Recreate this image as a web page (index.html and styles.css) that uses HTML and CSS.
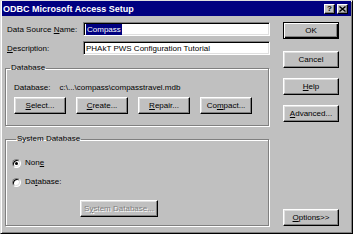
FILE: index.html
```html
<!DOCTYPE html>
<html>
<head>
<meta charset="utf-8">
<link rel="stylesheet" href="styles.css">
</head>
<body>
<div class="win">
  <div class="title">
    <span class="title-text">ODBC Microsoft Access Setup</span>
    <span class="tbtn q">?</span>
    <span class="tbtn x"><svg width="7" height="6" viewBox="0 0 7 6"><path d="M0.5 0.5 L6.5 5.5 M6.5 0.5 L0.5 5.5" stroke="#000" stroke-width="1.4"/></svg></span>
  </div>
  <div class="body">
    <div class="left">
      <div class="field">
        <span class="lbl">Data Source <u>N</u>ame:</span>
        <span class="input"><span class="sel">Compass</span></span>
      </div>
      <div class="field second">
        <span class="lbl"><u>D</u>escription:</span>
        <span class="input">PHAkT PWS Configuration Tutorial</span>
      </div>
      <fieldset class="group db">
        <legend>Database</legend>
        <div class="dbpath"><span>Database:</span><span>c:\...\compass\compasstravel.mdb</span></div>
        <div class="btnrow">
          <span class="btn sm"><u>S</u>elect...</span>
          <span class="btn sm"><u>C</u>reate...</span>
          <span class="btn sm"><u>R</u>epair...</span>
          <span class="btn sm">Co<u>m</u>pact...</span>
        </div>
      </fieldset>
      <fieldset class="group sys">
        <legend>System Database</legend>
        <div class="radio first"><span class="rb on"></span><span>Non<u>e</u></span></div>
        <div class="radio"><span class="rb"></span><span>Da<u>t</u>abase:</span></div>
        <span class="btn disabled sysbtn">S<u>y</u>stem Database...</span>
      </fieldset>
    </div>
    <div class="right">
      <span class="btn default">OK</span>
      <span class="btn cancel">Cancel</span>
      <span class="btn gap"><u>H</u>elp</span>
      <span class="btn gap"><u>A</u>dvanced...</span>
      <span class="btn options"><u>O</u>ptions&gt;&gt;</span>
    </div>
  </div>
</div>
</body>
</html>
```
FILE: styles.css
```css
* { box-sizing: border-box; }
body {
  margin: 0;
  font-family: "Liberation Sans", Arial, sans-serif;
  font-size: 8px;
  color: #000;
  background: #c0c0c0;
}
.win {
  width: 353px;
  height: 234px;
  background: #c0c0c0;
  border: 1px solid;
  border-color: #dfdfdf #000 #000 #dfdfdf;
  box-shadow: inset 1px 1px #fff, inset -1px -1px #808080;
  padding: 0 1px 1px 1px;
  display: flex;
  flex-direction: column;
}
.title {
  height: 15px;
  background: #000080;
  color: #fff;
  font-weight: bold;
  font-size: 9px;
  display: flex;
  align-items: center;
  padding: 0 3px 0 1px;
  gap: 2px;
}
.title-text { flex: 1; white-space: nowrap; }
.tbtn {
  width: 11px;
  height: 10px;
  background: #c0c0c0;
  color: #000;
  border: 1px solid;
  border-color: #fff #000 #000 #fff;
  box-shadow: inset -1px -1px #808080;
  display: flex;
  align-items: center;
  justify-content: center;
  font-size: 8px;
  font-weight: bold;
  line-height: 8px;
}
.body {
  flex: 1;
  display: flex;
  padding: 6px 12px 6px 3px;
}
.left { width: 266px; }
.field {
  display: flex;
  align-items: center;
  height: 14px;
}
.field.second { margin-top: 5px; }
.lbl {
  width: 78px;
  padding-left: 2px;
  white-space: nowrap;
}
.input {
  width: 187px;
  height: 14px;
  background: #fff;
  border: 1px solid;
  border-color: #808080 #fff #fff #808080;
  box-shadow: inset 1px 1px #000, inset -1px -1px #dfdfdf;
  padding: 0 2px;
  display: flex;
  align-items: center;
  white-space: nowrap;
  overflow: hidden;
}
.sel {
  background: #000080;
  color: #fff;
  padding: 1px 1px;
  line-height: 9px;
}
.group {
  margin: 0;
  padding: 0;
  width: 264px;
  min-width: 0;
  border: 1px solid #808080;
  box-shadow: inset 1px 1px #fff, 1px 1px 0 #fff;
}
.group legend {
  margin-left: 4px;
  padding: 0 1px;
  line-height: 10px;
}
.db { margin-top: 8px; padding-bottom: 11px; }
.dbpath {
  margin-top: 10px;
  line-height: 10px;
  padding-left: 8px;
  display: flex;
  gap: 9px;
  white-space: nowrap;
}
.btnrow {
  display: flex;
  gap: 10px;
  margin-top: 4px;
  padding-left: 8px;
}
.btn {
  height: 17px;
  display: flex;
  align-items: center;
  justify-content: center;
  background: #c0c0c0;
  border: 1px solid;
  border-color: #fff #000 #000 #fff;
  box-shadow: inset -1px -1px #808080, inset 1px 1px #dfdfdf;
  white-space: nowrap;
}
.btn.sm { width: 52px; }
.sys { margin-top: 8px; padding: 0 0 8px 6px; }
.radio {
  display: flex;
  align-items: center;
  gap: 4px;
  line-height: 10px;
  margin-top: 9px;
}
.radio.first { margin-top: 14px; }
.rb {
  width: 9px;
  height: 9px;
  border-radius: 50%;
  background: #fff;
  border: 1px solid;
  border-color: #808080 #fff #fff #808080;
  box-shadow: inset 1px 1px #000, inset -1px -1px #dfdfdf;
  display: flex;
  align-items: center;
  justify-content: center;
}
.rb.on::after {
  content: "";
  width: 3px;
  height: 3px;
  border-radius: 50%;
  background: #000;
}
.sysbtn {
  width: 78px;
  margin: 13px 0 0 68px;
}
.btn.disabled {
  color: #808080;
  text-shadow: 1px 1px 0 #fff;
}
.right {
  width: 56px;
  margin-left: auto;
  display: flex;
  flex-direction: column;
}
.btn.default {
  border: 1px solid #000;
  box-shadow: inset 1px 1px #fff, inset -1px -1px #000, inset -2px -2px #808080;
}
.btn.cancel { margin-top: 12px; }
.btn.gap { margin-top: 10px; }
.btn.options { margin-top: auto; }
```
